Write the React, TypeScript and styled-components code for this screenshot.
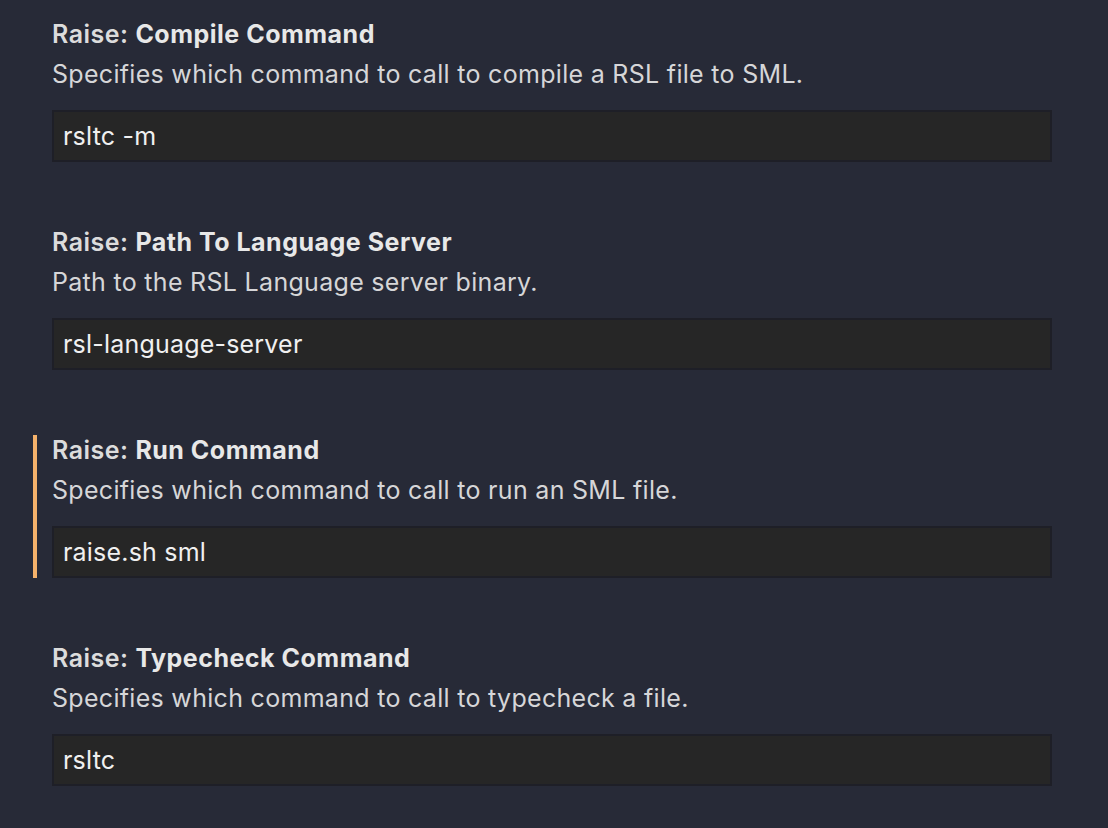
import * as React from "react";
import styled, { createGlobalStyle } from "styled-components";

const GlobalStyle = createGlobalStyle`
  html, body {
    margin: 0;
    padding: 0;
    background: #272a37;
  }
  body {
    font-family: Inter, "Noto Sans", sans-serif;
    -webkit-font-smoothing: antialiased;
  }
`;

const settings = [
  {
    prefix: "Raise: ",
    name: "Compile Command",
    desc: "Specifies which command to call to compile a RSL file to SML.",
    value: "rsltc -m",
  },
  {
    prefix: "Raise: ",
    name: "Path To Language Server",
    desc: "Path to the RSL Language server binary.",
    value: "rsl-language-server",
  },
  {
    prefix: "Raise: ",
    name: "Run Command",
    desc: "Specifies which command to call to run an SML file.",
    value: "raise.sh sml",
    modified: true,
  },
  {
    prefix: "Raise: ",
    name: "Typecheck Command",
    desc: "Specifies which command to call to typecheck a file.",
    value: "rsltc",
  },
];

const Page = styled.div`
  width: 1108px;
  height: 828px;
  overflow: hidden;
  box-sizing: border-box;
  padding: 19px 56px 0 33px;
  display: flex;
  flex-direction: column;
  gap: 65px;
`;

// left bar marks a setting whose value was changed
const Item = styled.div<{ $modified?: boolean }>`
  border-left: 4px solid ${p => (p.$modified ? "#f5b26b" : "transparent")};
  padding-left: 15px;
  display: flex;
  flex-direction: column;
`;

const Title = styled.div`
  font-size: 25px;
  line-height: 30px;
  color: #e8e8e8;
  font-weight: 700;
  letter-spacing: 0.5px;
`;

const Prefix = styled.span`
  font-weight: 600;
  color: #dcdcdc;
`;

const Description = styled.div`
  margin-top: 9px;
  font-size: 25px;
  line-height: 32px;
  color: #d6d6d8;
  letter-spacing: 0.3px;
`;

const Input = styled.div`
  margin-top: 20px;
  height: 52px;
  box-sizing: border-box;
  background: #262626;
  border: 2px solid #1e1f27;
  padding: 0 9px;
  display: flex;
  align-items: center;
  font-size: 25px;
  letter-spacing: 0.2px;
  color: #f0f0f0;
`;

const App = () => (
  <>
    <GlobalStyle />
    <Page>
      {settings.map(s => (
        <Item key={s.name} $modified={s.modified}>
          <Title>
            <Prefix>{s.prefix}</Prefix>
            {s.name}
          </Title>
          <Description>{s.desc}</Description>
          <Input>{s.value}</Input>
        </Item>
      ))}
    </Page>
  </>
);

export default App;
